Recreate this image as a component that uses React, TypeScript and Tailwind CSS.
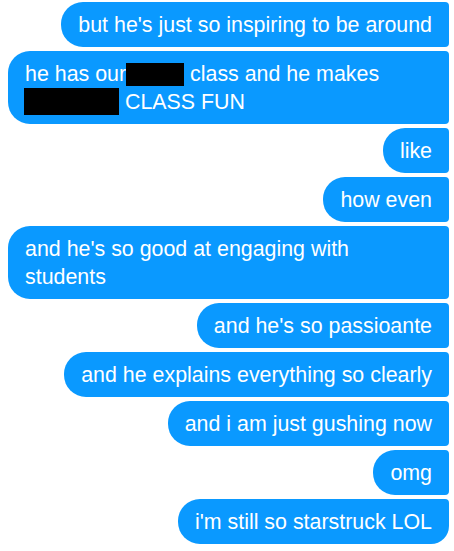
const messages: { id: number; text?: string; redacted?: boolean }[] = [
  { id: 1, text: "but he's just so inspiring to be around" },
  { id: 2, redacted: true },
  { id: 3, text: "like" },
  { id: 4, text: "how even" },
  { id: 5, text: "and he's so good at engaging with students" },
  { id: 6, text: "and he's so passioante" },
  { id: 7, text: "and he explains everything so clearly" },
  { id: 8, text: "and i am just gushing now" },
  { id: 9, text: "omg" },
  { id: 10, text: "i'm still so starstruck LOL" },
];

const Bubble = ({ children, last }: { children: React.ReactNode; last?: boolean }) => (
  <div
    className={`max-w-full bg-[#0a99ff] text-white text-[21.4px] leading-[28px] pt-[9px] pb-[8px] px-[17px] rounded-l-[22px] rounded-tr-[4px] ${
      last ? "rounded-br-[18px]" : "rounded-br-[4px]"
    }`}
  >
    {children}
  </div>
);

export default function App() {
  return (
    <div
      className="w-[454px] h-[551px] bg-white overflow-hidden flex flex-col items-end gap-[4px] pt-[2px] pl-[8px] pr-[5px]"
      style={{ fontFamily: '"Liberation Sans", Arial, sans-serif' }}
    >
      {messages.map((m, i) => (
        <Bubble key={m.id} last={i === messages.length - 1}>
          {m.redacted ? (
            <>
              he has our
              <span className="inline-block align-top mt-[3px] w-[58px] h-[23px] bg-black" /> class and he
              makes <span className="inline-block align-top -ml-px w-[95px] h-[27px] bg-black" /> CLASS FUN
            </>
          ) : (
            m.text
          )}
        </Bubble>
      ))}
    </div>
  );
}
